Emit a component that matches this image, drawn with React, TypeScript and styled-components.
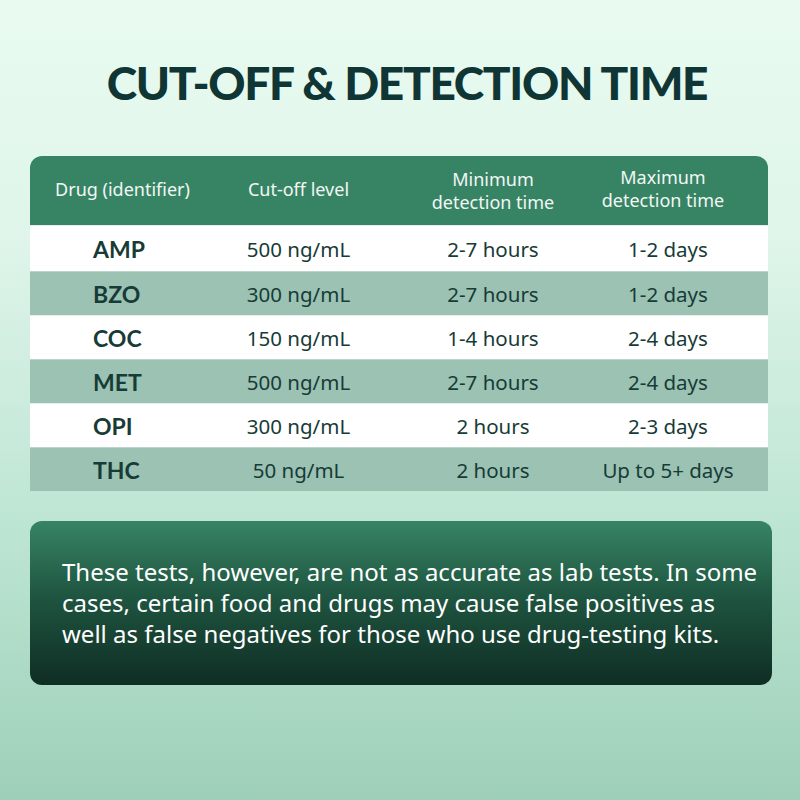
import React from "react";
import styled, { createGlobalStyle } from "styled-components";

const Global = createGlobalStyle`
  html, body { margin: 0; padding: 0; }
  body { width: 800px; height: 800px; overflow: hidden; }
`;

const Page = styled.div`
  width: 800px;
  height: 800px;
  box-sizing: border-box;
  background: linear-gradient(180deg, #e9fbf1 0%, #dff5ea 30%, #b9e3d0 70%, #9ecfb9 100%);
  padding: 56px 0 0 30px;
  font-family: "Noto Sans", "Open Sans", sans-serif;
`;

const Title = styled.h1`
  margin: 0;
  width: 740px;
  box-sizing: border-box;
  padding-left: 14px;
  text-align: center;
  font-family: Lato, "Open Sans", sans-serif;
  font-weight: 900;
  font-size: 46px;
  line-height: 54px;
  letter-spacing: -1.3px;
  color: #0f3535;
`;

const Table = styled.div`
  margin-top: 46px;
  width: 738px;
  display: grid;
  grid-template-columns: 185px 167px 206px 180px;
`;

const HeaderCell = styled.div<{ $first?: boolean; $last?: boolean; $pl?: number; $pr?: number; $dy?: number }>`
  height: 69px;
  box-sizing: border-box;
  background: #378465;
  color: #f2f7f4;
  display: flex;
  align-items: center;
  justify-content: center;
  text-align: center;
  font-size: 18px;
  line-height: 23px;
  padding-left: ${(p) => p.$pl ?? 0}px;
  padding-right: ${(p) => p.$pr ?? 0}px;
  padding-bottom: ${(p) => (p.$dy ?? 0) * 2}px;
  white-space: nowrap;
  border-top-left-radius: ${(p) => (p.$first ? "12px" : "0")};
  border-top-right-radius: ${(p) => (p.$last ? "12px" : "0")};
`;

const Cell = styled.div<{ $alt: boolean; $tall: boolean; $drug?: boolean; $pl?: number; $pr?: number }>`
  height: ${(p) => (p.$tall ? "46px" : "44px")};
  background: ${(p) => (p.$alt ? "#9bc2b2" : "#ffffff")};
  border-top: 1px solid ${(p) => (p.$alt ? "#b9d4c8" : "#e4efe9")};
  box-sizing: border-box;
  display: flex;
  align-items: center;
  justify-content: ${(p) => (p.$drug ? "flex-start" : "center")};
  padding-left: ${(p) => (p.$drug ? 63 : p.$pl ?? 0)}px;
  padding-right: ${(p) => p.$pr ?? 0}px;
  white-space: nowrap;
  color: #173b37;
  font-family: ${(p) => (p.$drug ? 'Lato, "Open Sans", sans-serif' : '"Noto Sans", sans-serif')};
  font-weight: ${(p) => (p.$drug ? 700 : 400)};
  font-size: ${(p) => (p.$drug ? "23px" : "20.5px")};
`;

const Note = styled.div`
  margin-top: 30px;
  width: 742px;
  height: 164px;
  box-sizing: border-box;
  border-radius: 12px;
  background: linear-gradient(180deg, #378465 0%, #1f5641 45%, #0f2d24 100%);
  color: #ffffff;
  padding: 35px 10px 0 32px;
  font-size: 24px;
  line-height: 31px;
`;

const rows = [
  ["AMP", "500 ng/mL", "2-7 hours", "1-2 days"],
  ["BZO", "300 ng/mL", "2-7 hours", "1-2 days"],
  ["COC", "150 ng/mL", "1-4 hours", "2-4 days"],
  ["MET", "500 ng/mL", "2-7 hours", "2-4 days"],
  ["OPI", "300 ng/mL", "2 hours", "2-3 days"],
  ["THC", "50 ng/mL", "2 hours", "Up to 5+ days"],
];

const padL = [0, 0, 16, 0];
const padR = [0, 0, 0, 20];

export default function App() {
  return (
    <Page>
      <Global />
      <Title>CUT-OFF &amp; DETECTION TIME</Title>
      <Table>
        <HeaderCell $first $dy={1}>Drug (identifier)</HeaderCell>
        <HeaderCell $dy={1}>Cut-off level</HeaderCell>
        <HeaderCell $pl={16}>Minimum<br />detection time</HeaderCell>
        <HeaderCell $last $pr={30} $dy={2}>Maximum<br />detection time</HeaderCell>
        {rows.map((r, i) =>
          r.map((c, j) => (
            <Cell
              key={`${i}-${j}`}
              $alt={i % 2 === 1}
              $tall={i === 0}
              $drug={j === 0}
              $pl={padL[j]}
              $pr={padR[j]}
            >
              {c}
            </Cell>
          ))
        )}
      </Table>
      <Note>
        These tests, however, are not as accurate as lab tests. In some cases, certain food and drugs may cause false positives as well as false negatives for those who use drug-testing kits.
      </Note>
    </Page>
  );
}
